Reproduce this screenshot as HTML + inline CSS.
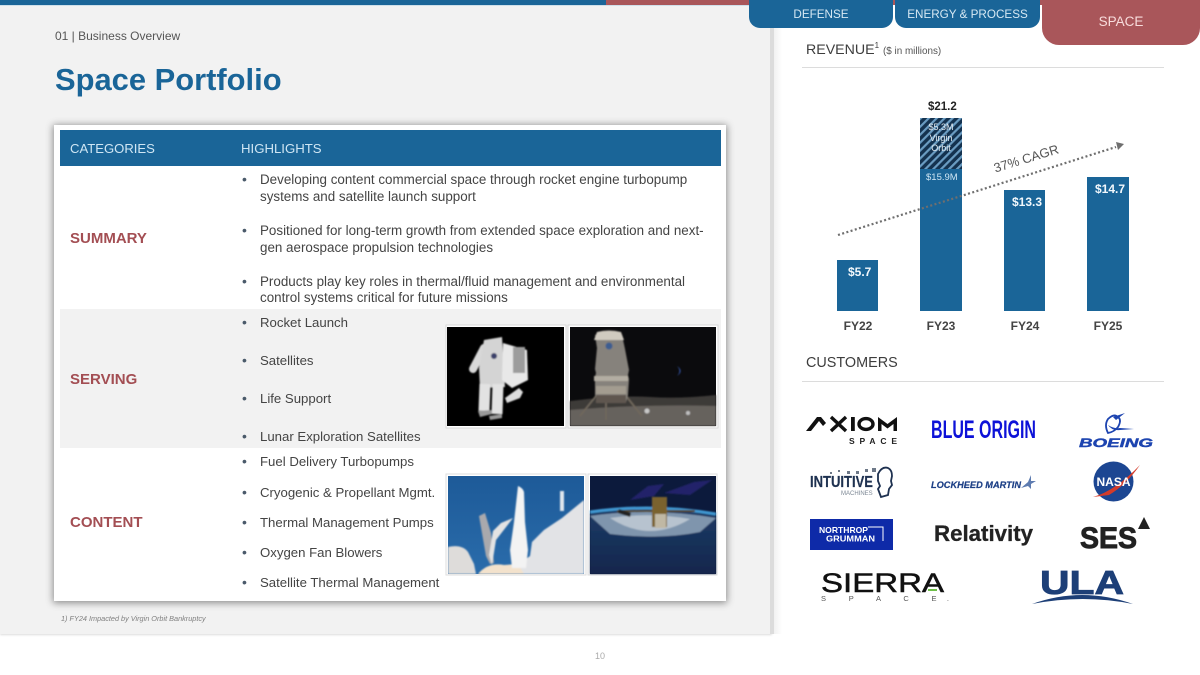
<!DOCTYPE html>
<html><head><meta charset="utf-8">
<style>
html,body{margin:0;padding:0;background:#fff}
#s{position:relative;width:1200px;height:675px;overflow:hidden;background:#fff;font-family:"Liberation Sans",sans-serif;color:#3a3a3a}
#s div,#s svg{position:absolute}
.t{white-space:nowrap}
.b{font-size:13.200px;line-height:17px;color:#444;white-space:nowrap}
.w{font-size:13.400px}
.d{font-size:14px;color:#4a5a6a;white-space:nowrap}
.c{font-size:15px;font-weight:bold;color:#a34e53;white-space:nowrap}
.tab{background:#1a6598;color:#d6e8f3;text-align:center;font-size:11.700px}
.lab{font-size:12px;font-weight:bold;color:#f2f8fc;white-space:nowrap;text-align:center}
.fy{font-size:12px;font-weight:bold;color:#444;text-align:center;width:60px}
</style></head><body>
<div id="s">
<div style="left:0;top:0;width:772px;height:634px;background:#f2f2f2;box-shadow:0 1px 2px rgba(0,0,0,.14)"></div>
<div style="left:770px;top:0;width:4px;height:634px;background:#dcdcdc"></div>
<div style="left:774px;top:0;width:8px;height:634px;background:linear-gradient(90deg,#f1f1f1,#fff)"></div>
<div style="left:0;top:0;width:1200px;height:5px;background:#a9565a"></div>
<div style="left:0;top:0;width:606px;height:5px;background:#1a6598"></div>
<div style="left:0;top:5px;width:770px;height:1px;background:#cfe0ea"></div>

<div class="tab" style="left:749px;top:0;width:144px;height:28px;border-radius:0 0 11px 11px;line-height:30px">DEFENSE</div>
<div class="tab" style="left:895px;top:0;width:145px;height:28px;border-radius:0 0 11px 11px;line-height:30px">ENERGY &amp; PROCESS</div>
<div style="left:1042px;top:0;width:158px;height:45px;background:#a9565a;border-radius:0 0 17px 17px;color:#f8dcdc;text-align:center;font-size:13.500px;line-height:43px">SPACE</div>

<div class="t" style="left:55px;top:28px;font-size:12px;line-height:16px;color:#555">01 | Business Overview</div>
<div class="t" style="left:55px;top:62px;font-size:30.900px;line-height:36px;font-weight:bold;color:#1a6598">Space Portfolio</div>

<div style="left:54px;top:125px;width:672px;height:476px;background:#fff;box-shadow:0 1px 7px 1px rgba(0,0,0,.42)"></div>
<div style="left:60px;top:130px;width:661px;height:36px;background:#1a6598"></div>
<div class="t" style="left:70px;top:140px;font-size:13.100px;line-height:17px;color:#cfe6f4">CATEGORIES</div>
<div class="t" style="left:241px;top:140px;font-size:13.200px;line-height:17px;color:#cfe6f4">HIGHLIGHTS</div>
<div style="left:60px;top:309px;width:661px;height:139px;background:#f2f2f2"></div>

<div class="c" style="left:70px;top:230px;line-height:18px">SUMMARY</div>
<div class="c" style="left:70px;top:371px;line-height:18px">SERVING</div>
<div class="c" style="left:70px;top:514px;line-height:18px">CONTENT</div>

<div class="d" style="left:242px;top:171px;line-height:17px">•</div>
<div class="b w" style="left:260px;top:171px">Developing content commercial space through rocket engine turbopump</div>
<div class="b w" style="left:260px;top:188px">systems and satellite launch support</div>
<div class="d" style="left:242px;top:222px;line-height:17px">•</div>
<div class="b w" style="left:260px;top:222px">Positioned for long-term growth from extended space exploration and next-</div>
<div class="b w" style="left:260px;top:239px">gen aerospace propulsion technologies</div>
<div class="d" style="left:242px;top:273px;line-height:17px">•</div>
<div class="b w" style="left:260px;top:273px">Products play key roles in thermal/fluid management and environmental</div>
<div class="b w" style="left:260px;top:289px">control systems critical for future missions</div>

<div class="d" style="left:242px;top:314px;line-height:17px">•</div><div class="b" style="left:260px;top:314px">Rocket Launch</div>
<div class="d" style="left:242px;top:352px;line-height:17px">•</div><div class="b" style="left:260px;top:352px">Satellites</div>
<div class="d" style="left:242px;top:390px;line-height:17px">•</div><div class="b" style="left:260px;top:390px">Life Support</div>
<div class="d" style="left:242px;top:428px;line-height:17px">•</div><div class="b" style="left:260px;top:428px">Lunar Exploration Satellites</div>

<div class="d" style="left:242px;top:453px;line-height:17px">•</div><div class="b" style="left:260px;top:453px">Fuel Delivery Turbopumps</div>
<div class="d" style="left:242px;top:484px;line-height:17px">•</div><div class="b" style="left:260px;top:484px">Cryogenic &amp; Propellant Mgmt.</div>
<div class="d" style="left:242px;top:514px;line-height:17px">•</div><div class="b" style="left:260px;top:514px">Thermal Management Pumps</div>
<div class="d" style="left:242px;top:544px;line-height:17px">•</div><div class="b" style="left:260px;top:544px">Oxygen Fan Blowers</div>
<div class="d" style="left:242px;top:574px;line-height:17px">•</div><div class="b" style="left:260px;top:574px">Satellite Thermal Management</div>

<!-- photos -->
<svg style="left:444px;top:323px" width="275" height="108" viewBox="444 323 275 108">
<defs><filter id="bl" x="-10%" y="-10%" width="120%" height="120%"><feGaussianBlur stdDeviation=".7"/></filter></defs>
<rect x="446" y="325" width="120" height="103" fill="#fff" stroke="#d8d8d8"/>
<rect x="568" y="325" width="150" height="103" fill="#fff" stroke="#d8d8d8"/>
<rect x="447" y="327" width="117" height="99" fill="#000"/>
<rect x="570" y="327" width="146" height="99" fill="#0b0b0d"/>
<g filter="url(#bl)">
<!-- astronaut -->
<path d="M484 348L473 369" stroke="#d8d8d8" stroke-width="8" stroke-linecap="round"/>
<path d="M484 340l18-3 3 50-25 1-1-20z" fill="#d4d4d4"/>
<path d="M485 384L484 411" stroke="#e2e2e2" stroke-width="11"/>
<path d="M498 384L497 414" stroke="#e2e2e2" stroke-width="11"/>
<path d="M478 411l14-1 0 4-12 3z M489 416l13-2 0 4-12 2z" fill="#9a9a9a"/>
<path d="M505 398l14-10 4 4-3 6-13 5z" fill="#dcdcdc"/>
<path d="M503 343l24 7 1 30-16 8-10-8z" fill="#e8e8e8"/>
<rect x="513" y="347" width="12" height="26" fill="#9c9c9c"/>
<circle cx="494" cy="356" r="3" fill="#3a3f6a"/>
<!-- lander -->
<path d="M570 401q50-6 80-4t66-2v31H570z" fill="#3e3b38"/>
<path d="M570 410q70-6 146-4v20H570z" fill="#66625d"/>
<path d="M596 396l-16 20M626 396l16 20M606 400v20" stroke="#6f675c" stroke-width="1.800"/>
<path d="M595 335q14-5 27 0l3 14 4 21-1 5 1 4-1 16-2 7-28 0-3-7 0-18 1-4-1-4 2-21z" fill="#86827c"/>
<path d="M597 332q12-3 24 0l3 8h-30z" fill="#d0cbc0"/>
<rect x="594" y="376" width="34" height="5" fill="#b3ada2"/>
<rect x="596" y="386" width="30" height="8" fill="#a39c90"/>
<rect x="596" y="395" width="30" height="8" fill="#5e5750"/>
<circle cx="609" cy="346" r="3.500" fill="#3d5d90"/>
<path d="M677 366q5 5 0 10q7-5 0-10z" fill="#3c64c8"/>
<circle cx="647" cy="411" r="2.500" fill="#c8c8c8"/><circle cx="688" cy="413" r="2" fill="#c0c0c0"/>
</g>
</svg>
<svg style="left:445px;top:473px" width="274" height="104" viewBox="445 473 274 104">
<defs><linearGradient id="sk" x1="0" y1="0" x2="0" y2="1"><stop offset="0" stop-color="#1d5a98"/><stop offset="1" stop-color="#2a6cab"/></linearGradient>
<linearGradient id="ea" x1="0" y1="0" x2="0" y2="1"><stop offset="0" stop-color="#1d3b66"/><stop offset="1" stop-color="#12264c"/></linearGradient></defs>
<rect x="446" y="474" width="140" height="101" fill="#fff" stroke="#ddd"/>
<rect x="588" y="474" width="129" height="101" fill="#fff" stroke="#ddd"/>
<rect x="448" y="476" width="136" height="98" fill="url(#sk)"/>
<rect x="590" y="476" width="126" height="98" fill="#0c1a3c"/>
<g filter="url(#bl)">
<path d="M584 500l-22 18-18 12-12 12-2 14-12 9-8 9h74z" fill="#e2e3e6"/>
<circle cx="556" cy="552" r="20" fill="#e2e3e6"/>
<path d="M448 547q14-3 20 5l6 12 2 10h-28z" fill="#dedcda"/>
<path d="M478 574q10-12 26-9l14-1 6 10z" fill="#f3e2cc"/>
<rect x="560" y="491" width="4" height="20" fill="#dfe6ee"/>
<path d="M518 486q5 2 6 6l1 30 3 28-2 18h-14l-2-18 4-28z" fill="#f3f3f3"/>
<path d="M485 513l-6 3 7 40 4 8 4-1-3-30z" fill="#a9a9ad"/>
<path d="M513 518l-12 5-8 8-4 24 3 10 4-25z" fill="#e3e3e3"/>
<path d="M590 513q63-9 126 2v59H590z" fill="url(#ea)"/>
<path d="M590 512q63-9 126 2" fill="none" stroke="#3f98d2" stroke-width="3"/>
<path d="M590 516q63-9 126 2l-16 14q-40 8-90 2z" fill="#7f95ad"/>
<path d="M610 518q40-6 80 1q-20 12-40 12t-40-13z" fill="#b7c3cf"/>
<path d="M630 500l18-14 16-2-10 12z M664 493l30-11 18-2-22 15z" fill="#23246a"/>
<path d="M617 511h78" stroke="#54492c" stroke-width="2"/>
<rect x="652" y="497" width="15" height="30" fill="#7a622e"/>
<rect x="655" y="514" width="11" height="14" fill="#c0b8a4"/>
<path d="M619 509l12 4-1 4-12-4z" fill="#222"/>
</g>
</svg>

<div class="t" style="left:61px;top:614px;font-size:7.300px;line-height:10px;font-style:italic;color:#7f7f7f">1) FY24 Impacted by Virgin Orbit Bankruptcy</div>
<div class="t" style="left:595px;top:651px;font-size:9px;line-height:11px;color:#aaa">10</div>

<!-- revenue -->
<div class="t" style="left:806px;top:41px;font-size:14.200px;line-height:18px;color:#3d3d3d">REVENUE<sup style="font-size:8px;line-height:0;vertical-align:6px">1</sup> <span style="font-size:9.900px;color:#555">($ in millions)</span></div>
<div style="left:802px;top:67px;width:362px;height:1px;background:#dcdcdc"></div>

<svg style="left:800px;top:90px" width="360" height="250" viewBox="800 90 360 250">
<defs><pattern id="h" width="5.600" height="5.600" patternUnits="userSpaceOnUse" patternTransform="rotate(45)"><rect width="5.600" height="5.600" fill="#14324f"/><rect width="2.200" height="5.600" fill="#6a9cc2"/></pattern></defs>
<rect x="837" y="260" width="41" height="51" fill="#1a6598"/>
<rect x="920" y="118" width="42" height="51" fill="url(#h)"/>
<rect x="920" y="169" width="42" height="142" fill="#1a6598"/>
<rect x="1004" y="190" width="41" height="121" fill="#1a6598"/>
<rect x="1087" y="177" width="42" height="134" fill="#1a6598"/>
<line x1="838" y1="235" x2="1116" y2="147" stroke="#6f6f6f" stroke-width="2.200" stroke-dasharray="2 2.400"/>
<path d="M1116 142l8 2-6 6z" fill="#6f6f6f"/>
<text x="1026" y="163" text-anchor="middle" font-size="13" fill="#555" transform="rotate(-17 1026 158)" font-family="Liberation Sans">37% CAGR</text>
</svg>
<div class="t" style="left:928px;top:100px;font-size:11.500px;line-height:14px;font-weight:bold;color:#222">$21.2</div>
<div style="left:920px;top:122px;width:42px;text-align:center;font-size:9px;line-height:10.500px;color:#dfe8ef">$5.3M<br>Virgin<br>Orbit</div>
<div class="t" style="left:926px;top:172px;font-size:9.500px;line-height:12px;color:#cfe6f4">$15.9M</div>
<div class="lab" style="left:848px;top:265px;line-height:14px">$5.7</div>
<div class="lab" style="left:1012px;top:195px;line-height:14px">$13.3</div>
<div class="lab" style="left:1095px;top:182px;line-height:14px">$14.7</div>
<div class="fy" style="left:828px;top:319px;line-height:14px">FY22</div>
<div class="fy" style="left:911px;top:319px;line-height:14px">FY23</div>
<div class="fy" style="left:995px;top:319px;line-height:14px">FY24</div>
<div class="fy" style="left:1078px;top:319px;line-height:14px">FY25</div>

<div class="t" style="left:806px;top:354px;font-size:14.400px;line-height:18px;color:#3d3d3d">CUSTOMERS</div>
<div style="left:802px;top:381px;width:362px;height:1px;background:#dcdcdc"></div>

<!-- logos -->
<svg style="left:800px;top:400px" width="360" height="215" viewBox="800 400 360 215" font-family="Liberation Sans">
<!-- Axiom -->
<path d="M806 431l11-14h4l5 6-3 3-4-5-8 10z" fill="#111"/>
<path d="M831 417l15 14M846 417l-15 14" stroke="#111" stroke-width="3.400"/>
<rect x="851" y="417" width="3.800" height="14" fill="#111"/>
<ellipse cx="866" cy="424" rx="7" ry="5.400" fill="none" stroke="#111" stroke-width="3.400"/>
<path d="M878 431v-14l9.500 7 9.500-7v14h-3.500v-7l-6 4.500-6-4.500v7z" fill="#111"/>
<text x="849" y="444" font-size="8.500" font-weight="bold" fill="#222" textLength="48">SPACE</text>
<!-- Blue origin -->
<text x="931" y="438" font-size="25" font-weight="bold" fill="#0d12d8" textLength="105" lengthAdjust="spacingAndGlyphs" style="font-family:'Liberation Sans Narrow','Liberation Sans',sans-serif">BLUE ORIGIN</text>
<!-- Boeing -->
<path d="M1108 433q-4-8 0-14 6-6 10-2 4 3 0 10-4 5-10 6z" fill="none" stroke="#1d44b0" stroke-width="1.800"/>
<path d="M1108 425q6 4 12 3l14 1-14 1q-8 1-12-5z M1113 417l12-4-9 7z" fill="#1d44b0"/>
<text x="1079" y="447" font-size="11.500" font-weight="bold" font-style="italic" fill="#1d44b0" stroke="#1d44b0" stroke-width=".4" textLength="74" lengthAdjust="spacingAndGlyphs">BOEING</text>
<!-- Intuitive -->
<text x="810" y="487" font-size="15.500" font-weight="bold" fill="#1e3150" stroke="#1e3150" stroke-width=".2" textLength="63" lengthAdjust="spacingAndGlyphs">INTUITIVE</text>
<text x="841" y="495" font-size="6" fill="#7c8794">MACHINES</text>
<path d="M830 472h2v2h-2z M838 470h2v2h-2z M847 471h3v3h-3z M856 471h3v3h-3z M865 469h3v3h-3z M872 468h4v4h-4z" fill="#6e7988"/>
<path d="M878 474q4-8 10-6 4 2 4 8l-1 5 1 4-3 4-1 6-7 2-3-8 2-3-2-5z" fill="#fff" stroke="#1e3150" stroke-width="1.800"/>
<!-- Lockheed -->
<text x="931" y="488" font-size="9.500" font-weight="bold" font-style="italic" fill="#1c3f86" stroke="#1c3f86" stroke-width=".2" textLength="90" lengthAdjust="spacingAndGlyphs">LOCKHEED MARTIN</text>
<path d="M1021 488l7-6 3-7 0 6 5 0-5 3 0 5-3-3z" fill="#5d7bb0"/>
<!-- NASA -->
<circle cx="1113.500" cy="481.500" r="20" fill="#1c4692"/>
<path d="M1093 497q22-6 47-32-14 20-31 30z" fill="#d33b2a"/>
<text x="1113.500" y="486" text-anchor="middle" font-size="12" font-weight="bold" fill="#fff">NASA</text>
<!-- Northrop -->
<rect x="810" y="519" width="83" height="31" fill="#0e2aa8"/>
<text x="819" y="533" font-size="8.300" font-weight="bold" fill="#fff" textLength="49" lengthAdjust="spacingAndGlyphs">NORTHROP</text>
<text x="826" y="541.500" font-size="8.300" font-weight="bold" fill="#fff" textLength="49" lengthAdjust="spacingAndGlyphs">GRUMMAN</text>
<path d="M868 527h15v14" fill="none" stroke="#fff" stroke-width="1"/>
<!-- Relativity -->
<text x="934" y="541" font-size="22.500" font-weight="bold" fill="#222" stroke="#222" stroke-width=".3" textLength="99" lengthAdjust="spacingAndGlyphs">Relativity</text>
<!-- SES -->
<text x="1080" y="548" font-size="30" font-weight="bold" fill="#222" stroke="#222" stroke-width=".9" textLength="57" lengthAdjust="spacingAndGlyphs">SES</text>
<path d="M1138 529l6-12 6 12z" fill="#222"/>
<!-- Sierra -->
<text x="821" y="592" font-size="27" fill="#111" stroke="#111" stroke-width=".5" textLength="123" lengthAdjust="spacingAndGlyphs">SIERRA</text>
<rect x="928" y="589" width="9" height="2" fill="#6fbf4a"/>
<text x="821" y="601" font-size="7.500" fill="#555" textLength="128">S  P  A  C  E.</text>
<!-- ULA -->
<text x="1040" y="594" font-size="33" font-weight="bold" fill="#1d3f77" stroke="#1d3f77" stroke-width=".8" textLength="84" lengthAdjust="spacingAndGlyphs">ULA</text>
<path d="M1032 604q50-18 101 0q-50-10-101 0z" fill="#1d3f77"/>
</svg>
</div>
</body></html>
